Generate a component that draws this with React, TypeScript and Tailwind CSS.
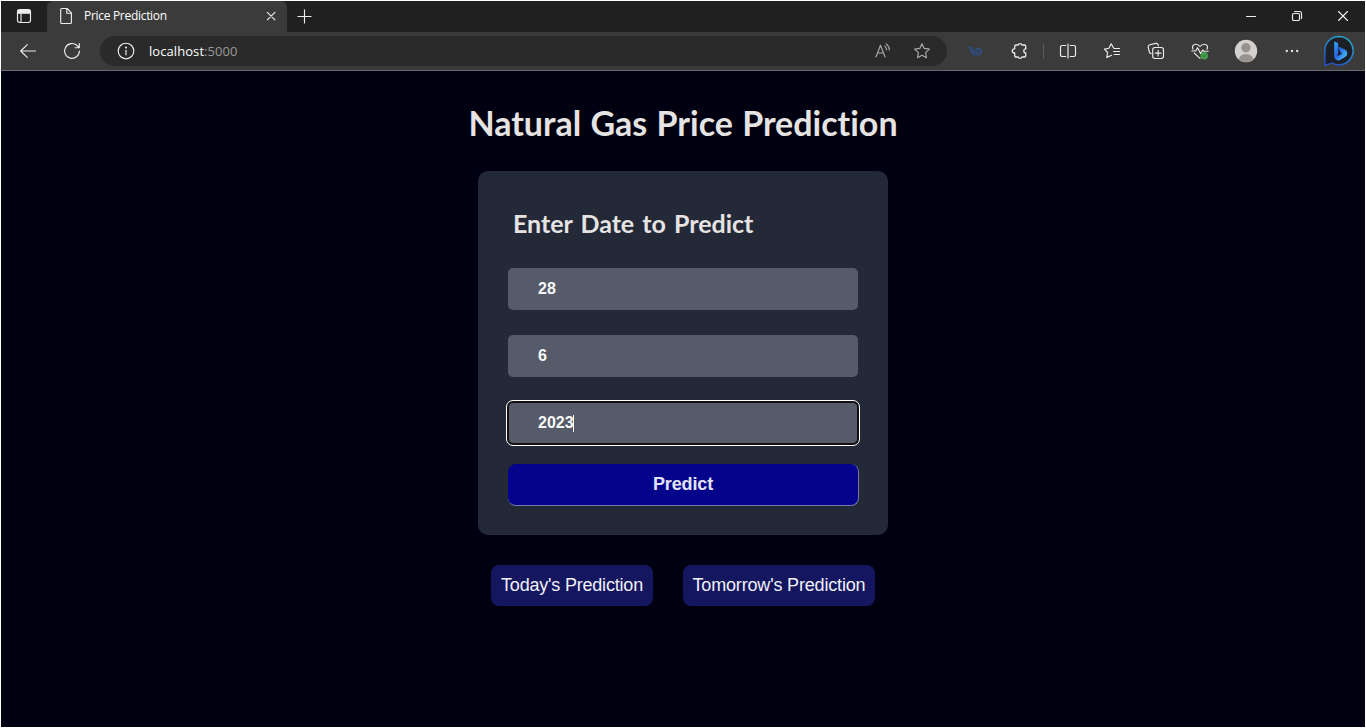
import type { ReactNode } from "react";

type IconProps = { children: ReactNode; className?: string; size?: number };

function Icon({ children, className = "text-[#ececec]", size = 20 }: IconProps) {
  return (
    <svg
      width={size}
      height={size}
      viewBox={`0 0 ${size} ${size}`}
      fill="none"
      stroke="currentColor"
      strokeWidth="1.15"
      strokeLinecap="round"
      strokeLinejoin="round"
      className={`block shrink-0 ${className}`}
    >
      {children}
    </svg>
  );
}

const STAR = "M10 2.7l2.2 4.7 5.2.7-3.8 3.6.9 5.1-4.5-2.5-4.5 2.5.9-5.1L2.6 8.1l5.2-.7z";

function TabStrip() {
  return (
    <div className="flex h-[31px] shrink-0 bg-[#202020] text-white">
      <div className="flex w-[46px] items-center justify-center rounded-br-[5px] pb-px">
        <Icon>
          <rect x="3.5" y="3.5" width="13" height="13" rx="2.2" />
          <path d="M4 4.5h12v2.7H4z" fill="currentColor" />
          <path d="M7 7.5v9" />
        </Icon>
      </div>
      <div className="flex w-[240px] items-center rounded-t-[6px] bg-[#3b3b3b] pb-px pl-[9px] pr-[6px]">
        <Icon>
          <path d="M5.7 2.5h5.4l4.3 4.3v9.7a1 1 0 0 1-1 1H5.7a1 1 0 0 1-1-1v-13a1 1 0 0 1 1-1z" />
          <path d="M10.8 2.7v4.5h4.4" />
        </Icon>
        <span className="ml-[8px] grow whitespace-nowrap font-['Open_Sans',sans-serif] text-[12px] leading-[16px] tracking-[-0.3px]">
          Price Prediction
        </span>
        <Icon>
          <path d="M6.3 6.3l7.6 7.6M13.9 6.3l-7.6 7.6" />
        </Icon>
      </div>
      <div className="flex w-[35px] items-center justify-center pb-[2px] pr-[2px]">
        <Icon>
          <path d="M10.5 3.5v14M3.5 10.5h14" strokeLinecap="butt" />
        </Icon>
      </div>
      <div className="ml-auto flex pb-px">
        <div className="flex w-[46px] items-center justify-center">
          <Icon>
            <path d="M5 10.5h10" strokeWidth="1" strokeLinecap="butt" />
          </Icon>
        </div>
        <div className="flex w-[46px] items-center justify-center">
          <Icon>
            <rect x="5.5" y="7.5" width="7" height="7" rx="1.3" />
            <path d="M7.5 5.5h5a2 2 0 0 1 2 2v5" />
          </Icon>
        </div>
        <div className="flex w-[45px] items-center justify-center">
          <Icon>
            <path d="M5.5 5.5l9 9M14.5 5.5l-9 9" />
          </Icon>
        </div>
      </div>
    </div>
  );
}

function AddressBar() {
  return (
    <div className="flex h-[30px] w-[847px] shrink-0 items-center rounded-full bg-[#2a2a2a] pl-[16px] pr-[15px]">
      <Icon>
        <circle cx="10" cy="10" r="7.8" />
        <path d="M10 9.2v4.6" />
        <circle cx="10" cy="6.6" r=".45" fill="currentColor" />
      </Icon>
      <span className="ml-[13px] grow font-['Open_Sans',sans-serif] text-[13px] leading-[18px] tracking-[0.07px] text-white">
        localhost<span className="text-[#999999]">:5000</span>
      </span>
      <Icon className="mr-[19px] text-[#a9a9a9]">
        <path d="M3 16L7.5 4.2 12 16M4.6 12h5.8" />
        <path d="M11.8 5.2c1.1.8 1.7 2 1.7 3.6M13.2 2.9c2 1.3 3.1 3.4 3.1 6" />
      </Icon>
      <Icon className="text-[#a9a9a9]">
        <path d={STAR} />
      </Icon>
    </div>
  );
}

function BingLogo() {
  return (
    <svg width="32" height="32" viewBox="0 0 32 32" className="block shrink-0">
      <defs>
        <linearGradient id="ring" x1="0.8" y1="0" x2="0.3" y2="1">
          <stop offset="0" stopColor="#2aaec4" />
          <stop offset="0.5" stopColor="#2180cf" />
          <stop offset="1" stopColor="#2850c4" />
        </linearGradient>
        <linearGradient id="bee" x1="0" y1="0" x2="1" y2="1">
          <stop offset="0" stopColor="#35a8f4" />
          <stop offset="0.45" stopColor="#2466e8" />
          <stop offset="1" stopColor="#52d8f4" />
        </linearGradient>
      </defs>
      <path
        d="M16 1.5a14.2 14.2 0 1 1-7 26.6L1.8 30.2V16A14.2 14.2 0 0 1 16 1.5z"
        fill="#1c2026"
        stroke="url(#ring)"
        strokeWidth="1.5"
        strokeLinejoin="round"
      />
      <path
        d="M11.2 6.600l3.200 1.100c.5.200.8.600.8 1.100v9.400l-1.100 3.200 5-3-1.600-.9-1.800-4.400c-.2-.7.3-1.200 1-.9l4.800 2.100c1.900.8 2.700 2.300 2.700 3.900 0 1.700-.8 2.900-2.200 3.700l-4.900 3c-1.300.8-2.600.7-3.900-.2-1.300-.8-2-1.900-2-3.400z"
        fill="url(#bee)"
      />
    </svg>
  );
}

function Toolbar() {
  return (
    <div className="flex h-[39px] shrink-0 items-center border-b border-[#686a70] bg-[#3b3b3b]">
      <div className="flex w-[99px] shrink-0 items-center pl-[16px]">
        <Icon size={22}>
          <path d="M18.5 11H3.8M10.3 4.7L3.7 11l6.6 6.3" />
        </Icon>
        <Icon size={22} className="ml-[22px] text-[#ececec]">
          <path d="M18.4 11a7.4 7.4 0 1 1-2.4-5.5l2.2 2.1M18.3 3.6v4.1h-4.2" />
        </Icon>
      </div>
      <AddressBar />
      <div className="ml-[18px] flex items-center">
        <svg width="20" height="20" viewBox="0 0 20 20" className="block" fill="none" stroke="#2f4d7c" strokeLinejoin="round">
          <path d="M4 5.500l1.800 4 2.400 4.200h5.400l2.200-1.200.6-3.500-2.600-1.400-2.800.4-.2 3.400 4.600-.4M6.500 5.500L8.200 9v4" strokeWidth="1.700" />
        </svg>
        <Icon className="ml-[24px] text-[#ececec]">
          <path
            strokeWidth="1.3"
            d="M6.200 4h2.300a2 2 0 0 1 3.800 0h2.500a1.200 1.200 0 0 1 1.200 1.200v2.600h.2a2.100 2.100 0 0 0 0 4.200h-.2v2.800a1.200 1.200 0 0 1-1.200 1.200h-2.500a2 2 0 0 1-3.800 0H6.200A1.200 1.200 0 0 1 5 14.800v-2.800h-.3a2.100 2.100 0 0 1 0-4.200H5V5.200A1.200 1.200 0 0 1 6.200 4z"
            transform="translate(.7 0)"
          />
        </Icon>
        <div className="ml-[14px] h-[15px] w-px bg-[#5c5c5c]" />
        <Icon className="ml-[14px] text-[#ececec]">
          <path d="M7.700 4.500H4.200a1.700 1.700 0 0 0-1.700 1.700v7.600a1.700 1.700 0 0 0 1.700 1.700h3.500M12.300 4.500h3.500a1.700 1.700 0 0 1 1.700 1.700v7.600a1.700 1.700 0 0 1-1.700 1.700h-3.500" />
          <path d="M10 3v14" strokeWidth="1.200" />
        </Icon>
        <Icon className="ml-[24px] text-[#ececec]">
          <path d="M12.200 7.500H17.500M11.500 10.500H17.500M12.200 13.500H17.500" />
          <path d="M11.600 7L9.200 2.800 6.900 7.300l-4.500.8 3.200 3.400-.8 5.100 4.700-2.400" />
        </Icon>
        <Icon className="ml-[24px] text-[#ececec]">
          <path d="M5.100 12.600a2 2 0 0 1-1.800-1.700L2.200 6.100a2 2 0 0 1 1.500-2.300l6.100-1.400a2 2 0 0 1 2.300 1.300l.3 1.200" />
          <rect x="6.700" y="6.500" width="10.800" height="11" rx="2.200" />
          <path d="M12.100 9.200V15M9.200 12.100H15" />
        </Icon>
        <Icon className="ml-[24px] text-[#ececec]">
          <path d="M3 8.200C1.600 5.300 3.300 3.200 5.800 3.200c1.700 0 3.100.8 4.200 2.300 1.100-1.500 2.500-2.300 4.200-2.300 2.500 0 4.200 2.100 2.800 5M4.300 12.200L10 17.400" />
          <path d="M1.800 10h3.800l2-3.300 3 5.700 2.100-3.400 1.200 1.200h4.300" />
          <circle cx="14.200" cy="14.700" r="3.800" fill="#46a04b" stroke="none" />
          <path d="M12.600 14.900l1.100 1 2.100-2.200" stroke="#256c2a" strokeWidth="1" />
        </Icon>
        <svg width="24" height="24" viewBox="0 0 24 24" className="ml-[24px] block">
          <circle cx="12" cy="12" r="11.200" fill="#d3d1cf" />
          <circle cx="12" cy="8.800" r="4.700" fill="#96928f" />
          <path d="M4.800 20.400c.5-3.500 3.200-5.200 7.200-5.200s6.700 1.700 7.200 5.200a11.200 11.200 0 0 1-14.400 0z" fill="#96928f" />
        </svg>
        <Icon className="ml-[24px] text-[#ececec]">
          <g fill="currentColor" stroke="none">
            <circle cx="4.800" cy="10" r="1.150" />
            <circle cx="10" cy="10" r="1.150" />
            <circle cx="15.200" cy="10" r="1.150" />
          </g>
        </Icon>
        <div className="ml-[21px]">
          <BingLogo />
        </div>
      </div>
    </div>
  );
}

function Field({ value, focused = false }: { value: string; focused?: boolean }) {
  return (
    <div
      className={
        focused
          ? "flex h-[42px] items-center rounded-[5px] border border-[#101014] bg-[#565b69] pl-[29px] shadow-[0_0_0_1px_#101014] outline outline-1 outline-offset-[1px] outline-white"
          : "flex h-[42px] items-center rounded-[5px] bg-[#565b69] pl-[30px]"
      }
    >
      <span className="text-[16px] font-bold leading-[18px] text-[#f8f8f8]">{value}</span>
      {focused && <span className="-ml-px h-[17px] w-px bg-white" />}
    </div>
  );
}

export default function App() {
  return (
    <div className="flex h-[728px] w-[1366px] flex-col overflow-hidden border border-white bg-[#000010] font-['Liberation_Sans',sans-serif]">
      <TabStrip />
      <Toolbar />
      <main className="flex grow flex-col items-center">
        <h1 className="mt-[29px] h-[46px] whitespace-nowrap font-['Lato','Open_Sans',sans-serif] text-[34px] font-bold leading-[46px] text-[#e6e3e3] [font-variant-ligatures:none] [word-spacing:1px]">
          Natural Gas Price Prediction
        </h1>
        <section className="mt-[25px] flex h-[364px] w-[410px] flex-col rounded-[10px] bg-[#242938] px-[30px]">
          <h2 className="ml-[5px] mt-[35px] h-[34px] whitespace-nowrap font-['Lato','Open_Sans',sans-serif] text-[25px] font-bold leading-[34px] text-[#e6e3e3] [font-variant-ligatures:none] [word-spacing:2px]">
            Enter Date to Predict
          </h2>
          <div className="mt-[28px] flex flex-col gap-[25px]">
            <Field value="28" />
            <Field value="6" />
            <Field value="2023" focused />
          </div>
          <button className="-mr-px mt-[20px] h-[42px] rounded-[8px] border-b border-r border-[#7777a8] bg-[#03038b] pb-[2px] text-[18px] font-bold leading-[20px] tracking-[-0.15px] text-[#e3e3f5]">
            Predict
          </button>
        </section>
        <div className="mt-[30px] flex gap-[30px]">
          <button className="h-[41px] w-[162px] whitespace-nowrap rounded-[8px] bg-[#14165f] text-[18px] tracking-[-0.2px] text-[#f0f0f8]">
            Today's Prediction
          </button>
          <button className="h-[41px] w-[192px] whitespace-nowrap rounded-[8px] bg-[#14165f] text-[18px] tracking-[-0.17px] text-[#f0f0f8]">
            Tomorrow's Prediction
          </button>
        </div>
      </main>
    </div>
  );
}
